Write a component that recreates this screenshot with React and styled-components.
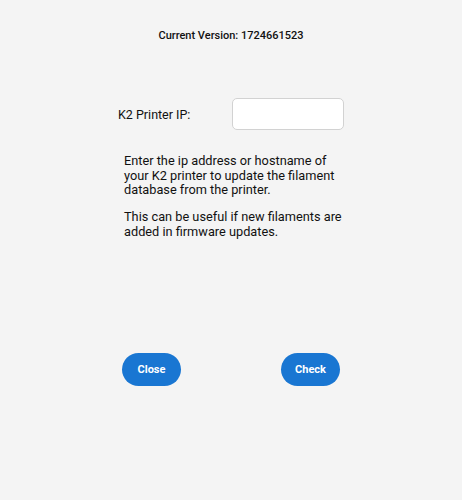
import styled, { createGlobalStyle } from "styled-components";

const GlobalStyle = createGlobalStyle`
  html, body {
    margin: 0;
    padding: 0;
    background: #f4f4f4;
  }
  body {
    font-family: Roboto, "Liberation Sans", sans-serif;
    color: #111;
  }
`;

const Page = styled.div`
  width: 462px;
  height: 500px;
  display: flex;
  flex-direction: column;
  align-items: center;
`;

const Version = styled.div`
  margin-top: 29px;
  font-size: 11px;
  font-weight: 500;
  line-height: 14px;
`;

const Panel = styled.div`
  width: 226px;
  display: flex;
  flex-direction: column;
`;

const IpRow = styled.div`
  margin-top: 55px;
  display: flex;
  align-items: center;
  justify-content: space-between;
`;

const Label = styled.label`
  font-size: 12.5px;
  font-weight: 400;
`;

const IpInput = styled.input`
  width: 112px;
  height: 32px;
  box-sizing: border-box;
  border: 1px solid #d2d2d2;
  border-radius: 5px;
  background: #fff;
  outline: none;
  font: inherit;
`;

const Help = styled.div`
  margin-top: 24px;
  padding-left: 6px;
  font-size: 12.75px;
  font-weight: 400;
  line-height: 14.5px;

  p {
    margin: 0 0 12.5px;
  }
`;

const Buttons = styled.div`
  margin-top: 101px;
  display: flex;
  justify-content: space-between;
  padding: 0 4px;
`;

const Button = styled.button`
  width: 59px;
  height: 33px;
  border: 0;
  border-radius: 17px;
  background: #1976d2;
  color: #fff;
  font-family: inherit;
  font-size: 11px;
  font-weight: 700;
  cursor: pointer;
`;

export default function App() {
  return (
    <>
      <GlobalStyle />
      <Page>
        <Version>Current Version: 1724661523</Version>
        <Panel>
          <IpRow>
            <Label>K2 Printer IP:</Label>
            <IpInput type="text" />
          </IpRow>
          <Help>
            <p>
              Enter the ip address or hostname of
              <br />
              your K2 printer to update the filament
              <br />
              database from the printer.
            </p>
            <p>
              This can be useful if new filaments are
              <br />
              added in firmware updates.
            </p>
          </Help>
          <Buttons>
            <Button>Close</Button>
            <Button>Check</Button>
          </Buttons>
        </Panel>
      </Page>
    </>
  );
}
